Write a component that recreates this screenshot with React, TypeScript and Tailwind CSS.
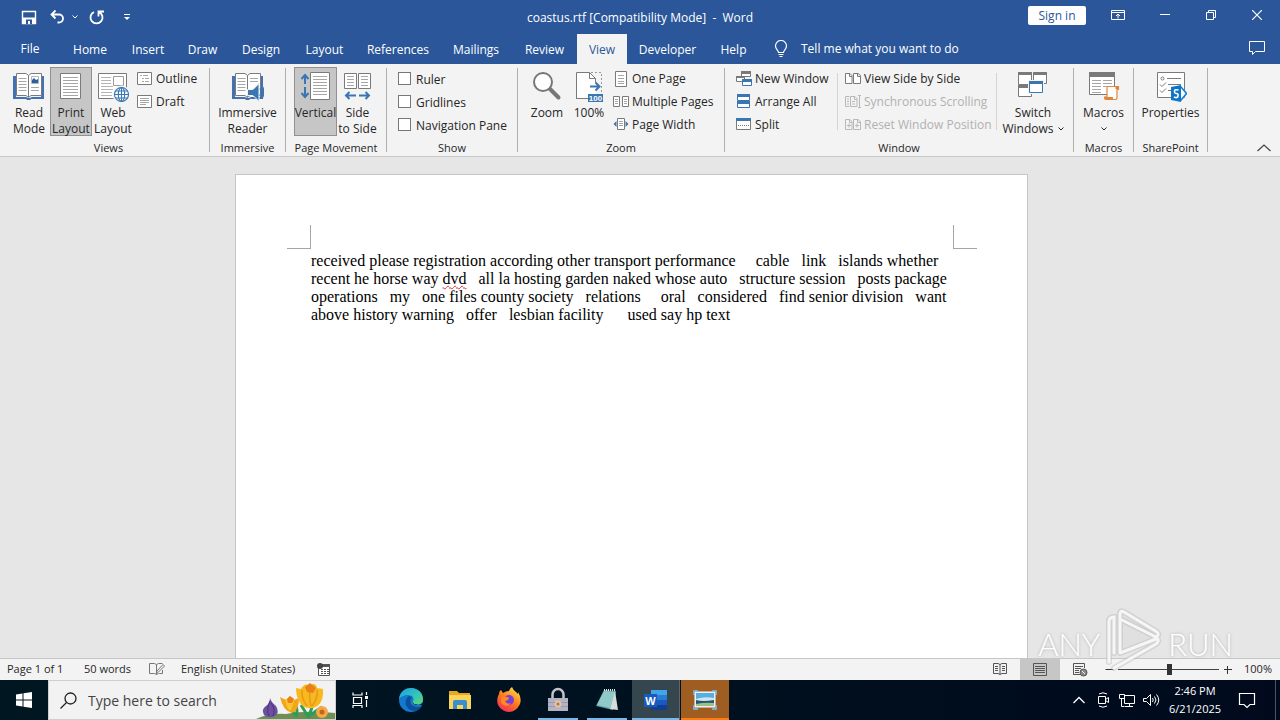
import type { ReactNode } from "react";

type IconProps = { children: ReactNode; w?: number; h?: number };

function Svg({ children, w = 16, h = 16 }: IconProps) {
  return (
    <svg width={w} height={h} viewBox={`0 0 ${w} ${h}`} fill="none" aria-hidden="true" className="shrink-0">
      {children}
    </svg>
  );
}

const GREY = "#7a7a7a";
const LINE = "#a6a6a6";
const BLUE = "#3a76b1";

/* ---------- large ribbon icons, 32 x 32 ---------- */

function OpenBook() {
  return (
    <>
      <path d="M0 6h3v21h10l2 1h2l2-1h9V6h3v23H18l-1 1h-3l-1-1H0z" fill="#4472b0" />
      <path d="M3.500 3.500H13l2.500 2 2.500-2h10.500v22H18l-2.500 2-2.500-2H3.500z" fill="#fff" stroke={GREY} />
      <path d="M15.500 5.500V27" stroke={GREY} />
      <path d="M5.500 8.500h8M5.500 11.500h8M5.500 14.500h8M5.500 17.500h8M5.500 20.500h8" stroke={LINE} />
    </>
  );
}

function ReadModeIcon() {
  return (
    <Svg w={32} h={32}>
      <OpenBook />
      <path d="M18.500 6.500h7v7h-7z" stroke="#a9b9cc" fill="#fff" />
      <path d="M19 13v-3l2-2 2 2 2-1v4z" fill="#2f6098" />
      <path d="M18 17.500h8M18 20.500h8" stroke={LINE} />
    </Svg>
  );
}

function PrintLayoutIcon() {
  return (
    <Svg w={32} h={32}>
      <path d="M5.500 3.500h20v25h-20z" fill="#fff" stroke={GREY} />
      <path d="M8 7.500h15M8 10.500h15M8 13.500h15M8 16.500h15M8 19.500h15M8 22.500h15M8 25.500h15" stroke={LINE} />
    </Svg>
  );
}

function Globe({ x, y }: { x: number; y: number }) {
  return (
    <g transform={`translate(${x} ${y})`} stroke={BLUE} strokeWidth="1.100">
      <circle r="7" fill="#fff" />
      <ellipse rx="3.200" ry="7" />
      <path d="M-7 0H7M0-7V7M-6-3.500H6M-6 3.500H6" />
    </g>
  );
}

function WebLayoutIcon() {
  return (
    <Svg w={32} h={32}>
      <path d="M1.500 3.500h28v25h-28z" fill="#fff" stroke={GREY} />
      <path d="M4 7.500h10M4 10.500h10M4 13.500h10M4 16.500h12M4 19.500h12M4 22.500h11M4 25.500h11" stroke="#b4b4b4" />
      <path d="M16.500 6.500h10v9h-10z" stroke="#9a9a9a" fill="#fff" />
      <circle cx="24.500" cy="24.500" r="9" fill="#f3f3f3" />
      <Globe x={24.500} y={24.500} />
    </Svg>
  );
}

function ImmersiveIcon() {
  return (
    <Svg w={32} h={32}>
      <OpenBook />
      <path d="M18 8.500h8M18 11.500h8" stroke={LINE} />
      <path d="M15.500 19.500H21l6-6v18l-6-6h-5.500z" fill={BLUE} stroke="#f3f3f3" />
      <path d="M28 18.500q2 3.500 0 7M30 15.500q3.500 6.500 0 13" stroke={BLUE} strokeWidth="1.400" />
    </Svg>
  );
}

function VerticalIcon() {
  return (
    <Svg w={32} h={32}>
      <path d="M10.500 2.500h19v27h-19z" fill="#fff" stroke={GREY} />
      <path d="M13 6.500h14M13 9.500h14M13 12.500h14M13 15.500h14M13 18.500h14M13 21.500h14M13 24.500h14" stroke={LINE} />
      <path d="M5 14V5M1.500 9 5 5l3.500 4M5 17v10M1.500 23 5 27l3.500-4" stroke={BLUE} strokeWidth="2" />
    </Svg>
  );
}

function SideIcon() {
  return (
    <Svg w={32} h={32}>
      <path d="M2.500 3.500h12v15h-12zM16.500 3.500h12v15h-12z" fill="#fff" stroke={GREY} />
      <path d="M5 6.500h7M5 9.500h7M5 12.500h7M5 15.500h7M19 6.500h7M19 9.500h7M19 12.500h7M19 15.500h7" stroke={LINE} />
      <path d="M14 25.500H4M7.500 22 4 25.500 7.500 29M17 25.500h10M23.500 22l3.500 3.500-3.500 3.500" stroke={BLUE} strokeWidth="2" />
    </Svg>
  );
}

function ZoomIcon() {
  return (
    <Svg w={32} h={32}>
      <path d="m18.500 18.500 9 9" stroke="#777" strokeWidth="4" strokeLinecap="round" />
      <circle cx="12" cy="12" r="9" fill="#fff" stroke="#777" strokeWidth="2" />
    </Svg>
  );
}

function HundredIcon() {
  return (
    <Svg w={32} h={32}>
      <path d="M16 28.500H3.500v-26h13l6 6V24H16z" fill="#fff" />
      <path d="M3.500 28.500v-26h13l6 6v4M16.500 2.500v6h6M3 28.500h12" stroke={GREY} />
      <path d="M18 2.500h10.500V22" stroke="#9a9a9a" strokeDasharray="2 2" />
      <path d="M17 16.500h9M22.500 12.500l4 4-4 4" stroke={BLUE} strokeWidth="2" />
      <path d="M15 24h15v8H15z" fill={BLUE} />
      <text x="22.500" y="31" fontSize="8" fontWeight="700" fill="#fff" textAnchor="middle" fontFamily="Liberation Sans, sans-serif">100</text>
    </Svg>
  );
}

function SwitchIcon() {
  return (
    <Svg w={32} h={32}>
      <path d="M1.500 2.500h13v12h-13zM16.500 2.500h13v11h-13zM1.500 15.500h13v11h-13z" fill="#fff" stroke={GREY} />
      <path d="M1 2h14v3H1zM16 2h14v3H16zM1 15h14v3H1z" fill={GREY} />
      <path d="M11 10h16v14H11z" fill="#f3f3f3" />
      <path d="M12.500 11.500h13v11h-13z" fill="#fff" stroke={BLUE} />
      <path d="M12 11h14v3H12z" fill={BLUE} />
    </Svg>
  );
}

function MacrosIcon() {
  return (
    <Svg w={32} h={32}>
      <path d="M1.500 2.500h25v22h-25z" fill="#fff" stroke={GREY} />
      <path d="M1 2h26v5H1z" fill={GREY} />
      <path d="M4 10.500h9M15 10.500h9M4 13.500h9M15 13.500h9M4 16.500h9M15 16.500h7M4 19.500h9M4 22.500h9" stroke={LINE} />
      <path d="M20 16.500h10.500v3H29V28q0 1.500-1.500 1.500H18q-1.500 0-1.500-2.500h2.500v-8.500q0-2 1-2z" fill="#fff" stroke="#e0853c" strokeWidth="1.200" />
      <path d="M17 27h8v2.500h-8zM27.500 16.500h3v2.500h-3z" fill="#e0853c" />
    </Svg>
  );
}

function PropertiesIcon() {
  return (
    <Svg w={32} h={32}>
      <path d="M2.500 2.500h27v25h-27z" fill="#fff" stroke={GREY} />
      <circle cx="7.500" cy="8.500" r="1.500" stroke={GREY} />
      <path d="M12 8.500h14M5 14.500l2 2 4-4M13 14.500h13M5 20.500l2 2 4-4M13 20.500h4" stroke={GREY} />
      <path d="m26 17 5.500 6.500-5.500 6.500-6-6.500z" fill="#fff" stroke="#1381d3" strokeWidth="1.600" />
      <path d="m16 17 10-2v17l-10-2z" fill="#0e76c8" />
      <path d="M23.500 20q-4-1-4 1.300t2 2.200 1.500 2.500-4 1" stroke="#fff" strokeWidth="1.600" />
    </Svg>
  );
}

/* ---------- small ribbon icons, 16 x 16 ---------- */

const smallIcons: Record<string, ReactNode> = {
  outline: (
    <>
      <path d="M.500 1.500h14v12H.500z" fill="#fff" stroke={GREY} />
      <path d="M3 4.500h2M6 4.500h5M5 7.500h2M8 7.500h4M5 10.500h2M8 10.500h4" stroke={LINE} />
    </>
  ),
  draft: (
    <>
      <path d="M.500 1.500h14v12H.500z" fill="#fff" stroke={GREY} />
      <path d="M3 4.500h9M3 6.500h9M3 8.500h9M3 10.500h6" stroke={LINE} />
    </>
  ),
  onePage: (
    <>
      <path d="M2.500.500h11v15h-11z" fill="#fff" stroke={GREY} />
      <path d="M5 4.500h6M5 7.500h6M5 10.500h6M5 12.500h6" stroke={LINE} />
    </>
  ),
  multiPage: (
    <>
      <path d="M.500 2.500h6v10h-6zM9.500 2.500h6v10h-6z" fill="#fff" stroke={GREY} />
      <path d="M2 5.500h3M2 7.500h3M2 9.500h3M11 5.500h3M11 7.500h3M11 9.500h3" stroke={LINE} />
    </>
  ),
  pageWidth: (
    <>
      <path d="M4.500 1.500h7v11h-7z" fill="#fff" stroke={GREY} />
      <path d="M6 4.500h4M6 6.500h4M6 8.500h4" stroke={LINE} />
      <path d="m3.500 4-3 3 3 3zM12.500 4l3 3-3 3z" fill={BLUE} />
    </>
  ),
  newWindow: (
    <>
      <path d="M5.500.500h9v5h-9zM.500 5.500h8v5h-8z" fill="#fff" stroke={GREY} />
      <path d="M5 0h10v3H5zM0 5h9v2H0z" fill={GREY} />
      <path d="M6.500 8.500h9v6h-9z" fill="#fff" stroke={BLUE} />
      <path d="M6 8h10v3H6z" fill={BLUE} />
    </>
  ),
  arrange: (
    <>
      <path d="M1.500.500h12v6h-12zM1.500 7.500h12v6h-12z" fill="#fff" stroke={BLUE} />
      <path d="M1 0h13v3H1zM1 7h13v3H1z" fill={BLUE} />
    </>
  ),
  split: (
    <>
      <path d="M.500 1.500h14v11H.500z" fill="#fff" stroke={GREY} />
      <path d="M0 1h15v3H0z" fill={BLUE} />
      <path d="M2 8.500h11" stroke={GREY} strokeDasharray="1 1" />
    </>
  ),
  sideBySide: (
    <path d="M.500 2.500H5l2 2v8H.500zM8.500 2.500H13l2.500 2v8h-7zM4.500 2.500v3H7M12.500 2.500v3h3" fill="#fff" stroke={GREY} />
  ),
  sync: (
    <>
      <path d="M.500 2.500h4M.500 2.500v10h4M5.500 2.500H10l2 2v8H5.500zM9.500 2.500v3H12M2 5h2M2 7.500h2M2 10h2M7 7.500h3M7 10h3" stroke="#b8b8b8" />
      <path d="M14.500 1.500v12M13 1.500h3M13 13.500h3" stroke="#b8b8b8" />
    </>
  ),
  reset: (
    <path d="M.500 2.500H5l2 2v8H.500zM8.500 2.500H13l2.500 2v8h-7zM4.500 2.500v3H7M12.500 2.500v3h3M2 8.500h4M4 6.500v4M10 8.500h4M12 6.500v4" stroke="#b8b8b8" />
  ),
};

function Chevron() {
  return (
    <svg width="6" height="4" viewBox="0 0 6 4" fill="none" aria-hidden="true" className="shrink-0">
      <path d="m.500.500 2.500 2.500L5.500.500" stroke="currentColor" />
    </svg>
  );
}

function Big({ icon, lines, width, active }: { icon: ReactNode; lines: ReactNode[]; width: string; active?: boolean }) {
  return (
    <button
      type="button"
      aria-pressed={active}
      className={`flex h-[69px] shrink-0 flex-col items-center border pt-0.5 leading-4 whitespace-nowrap ${width} ${
        active ? "border-[#919191] bg-[#c6c6c6]" : "border-transparent"
      }`}
    >
      {icon}
      <span className="mt-[3px] flex flex-col items-center">
        {lines.map((l, i) => (
          <span key={i} className="flex h-4 items-center justify-center gap-1">
            {l}
          </span>
        ))}
      </span>
    </button>
  );
}

function Small({ icon, label, disabled }: { icon: string; label: string; disabled?: boolean }) {
  return (
    <button
      type="button"
      disabled={disabled}
      className="flex h-[23px] items-center gap-[3px] text-left whitespace-nowrap disabled:text-[#b1b1b1]"
    >
      <Svg>{smallIcons[icon]}</Svg>
      {label}
    </button>
  );
}

function Check({ label }: { label: string }) {
  return (
    <label className="flex h-[23px] items-center gap-[5px] whitespace-nowrap">
      <input type="checkbox" className="size-[13px] appearance-none border border-[#777] bg-white" />
      <span className="pt-0.5">{label}</span>
    </label>
  );
}

function Group({ label, width, children }: { label: string; width: string; children: ReactNode }) {
  return (
    <section aria-label={label} className={`flex shrink-0 flex-col pt-[3px] ${width}`}>
      <div className="flex h-[69px]">{children}</div>
      <div className="pt-1 text-center text-[11px] leading-4 whitespace-nowrap">{label}</div>
    </section>
  );
}

function Sep() {
  return <div className="mt-1 h-[84px] w-px shrink-0 bg-[#b0b0b0]" />;
}

const tabs: [string, string][] = [
  ["Home", "w-[60px]"],
  ["Insert", "w-[56px]"],
  ["Draw", "w-[53px]"],
  ["Design", "w-[64px]"],
  ["Layout", "w-[63px]"],
  ["References", "w-[84px]"],
  ["Mailings", "w-[72px]"],
  ["Review", "w-[65px]"],
  ["View", "w-[50px]"],
  ["Developer", "w-[81px]"],
  ["Help", "w-[51px]"],
];

function TitleBar() {
  return (
    <header className="grid h-[34px] shrink-0 grid-cols-[1fr_auto_1fr] items-center text-white">
      <div className="flex items-center pl-5">
        <button type="button" aria-label="Save" className="w-7">
          <Svg w={18}>
            <path d="M2.500 2.500h13v12h-13z" stroke="#fff" strokeWidth="1.400" />
            <path d="M2 8.500h14v6H2z" fill="#fff" />
            <path d="M6 10.500h6V15H6z" fill="#2b579a" />
            <path d="M8 12h2v3H8z" fill="#fff" />
          </Svg>
        </button>
        <button type="button" aria-label="Undo" className="flex w-10 items-center gap-1.5">
          <Svg w={18}>
            <path d="M7.500 1.500 3.500 5.500l4 4M4 5.500h7a4 4 0 0 1 0 8H9.500" stroke="#fff" strokeWidth="1.800" />
          </Svg>
          <Chevron />
        </button>
        <button type="button" aria-label="Repeat" className="w-8">
          <Svg w={18}>
            <path d="M6 3a6 6 0 1 0 5 0M10.500 7.500V2.500H16" stroke="#fff" strokeWidth="1.800" />
          </Svg>
        </button>
        <button type="button" aria-label="Customize Quick Access Toolbar" className="mx-0.5">
          <Svg w={10} h={10}>
            <path d="M2 2.500h6" stroke="#fff" />
            <path d="M2 5h6L5 8z" fill="#fff" />
          </Svg>
        </button>
      </div>
      <h1 className="pt-0.5 text-[12px] whitespace-pre">coastus.rtf [Compatibility Mode]  -  Word</h1>
      <div className="flex items-center justify-end pb-1">
        <button type="button" className="mr-5 h-[19px] w-[58px] rounded-xs bg-white leading-5 text-[#2b579a]">Sign in</button>
        <button type="button" aria-label="Ribbon Display Options" className="flex w-9 justify-start pl-1">
          <Svg>
            <path d="M1.500 3.500h13v9h-13zM1.500 5.500h13M8 11.500V7M6 9l2-2 2 2" stroke="#fff" />
          </Svg>
        </button>
        <button type="button" aria-label="Minimize" className="flex w-[46px] justify-center">
          <Svg w={10} h={10}><path d="M0 4.500h10" stroke="#fff" /></Svg>
        </button>
        <button type="button" aria-label="Restore" className="flex w-[46px] justify-center">
          <Svg w={10} h={10}>
            <path d="M.500 2.500h7v7h-7z" stroke="#fff" />
            <path d="M2.500 2V.500h7v7H8" stroke="#fff" />
          </Svg>
        </button>
        <button type="button" aria-label="Close" className="flex w-[46px] justify-center">
          <Svg w={10} h={10}><path d="m0 0 10 10M10 0 0 10" stroke="#fff" strokeWidth="1.200" /></Svg>
        </button>
      </div>
    </header>
  );
}

function TabBar() {
  return (
    <nav className="flex h-[30px] shrink-0 items-stretch text-white">
      <button type="button" className="w-[60px]">File</button>
      {tabs.map(([t, w]) => (
        <button
          key={t}
          type="button"
          className={`shrink-0 pt-0.5 ${w} ${t === "View" ? "bg-[#f3f3f3] text-[#2b579a]" : ""}`}
        >
          {t}
        </button>
      ))}
      <button type="button" className="flex items-center gap-3 pl-[14px] font-medium">
        <Svg w={16} h={18}>
          <path d="M5.500 12.500c0-2-3-3-3-6.500a5.500 5.500 0 0 1 11 0c0 3.500-3 4.500-3 6.500zM5.500 14.500h5M6.500 16.500h3" stroke="#fff" strokeWidth="1.200" />
        </Svg>
        Tell me what you want to do
      </button>
      <button type="button" aria-label="Comments" className="mr-3.5 ml-auto pb-1">
        <Svg w={18} h={18}>
          <path d="M1.500 3.500h15v10h-9l-3 3v-3h-3z" stroke="#fff" />
        </Svg>
      </button>
    </nav>
  );
}

function Ribbon() {
  return (
    <div className="flex h-[93px] shrink-0 border-b border-[#c8c8c8] bg-[#f3f3f3] text-[#262626]">
      <Group label="Views" width="w-[209px] pl-2">
        <Big icon={<ReadModeIcon />} lines={["Read", "Mode"]} width="w-[42px]" />
        <Big icon={<PrintLayoutIcon />} lines={["Print", "Layout"]} width="w-[42px]" active />
        <Big icon={<WebLayoutIcon />} lines={["Web", "Layout"]} width="w-[42px]" />
        <div className="ml-[3px] flex flex-col">
          <Small icon="outline" label="Outline" />
          <Small icon="draft" label="Draft" />
        </div>
      </Group>
      <Sep />
      <Group label="Immersive" width="w-[75px]">
        <Big icon={<ImmersiveIcon />} lines={["Immersive", "Reader"]} width="w-full" />
      </Group>
      <Sep />
      <Group label="Page Movement" width="w-[100px] px-2">
        <Big icon={<VerticalIcon />} lines={["Vertical"]} width="w-[43px]" active />
        <Big icon={<SideIcon />} lines={["Side", "to Side"]} width="w-[41px]" />
      </Group>
      <Sep />
      <Group label="Show" width="w-[130px]">
        <div className="ml-[11px] flex flex-col">
          <Check label="Ruler" />
          <Check label="Gridlines" />
          <Check label="Navigation Pane" />
        </div>
      </Group>
      <Sep />
      <Group label="Zoom" width="w-[206px]">
        <Big icon={<ZoomIcon />} lines={["Zoom"]} width="ml-2 w-[42px]" />
        <Big icon={<HundredIcon />} lines={["100%"]} width="w-[42px]" />
        <div className="ml-[3px] flex flex-col">
          <Small icon="onePage" label="One Page" />
          <Small icon="multiPage" label="Multiple Pages" />
          <Small icon="pageWidth" label="Page Width" />
        </div>
      </Group>
      <Sep />
      <Group label="Window" width="w-[348px]">
        <div className="ml-[11px] flex w-[101px] flex-col">
          <Small icon="newWindow" label="New Window" />
          <Small icon="arrange" label="Arrange All" />
          <Small icon="split" label="Split" />
        </div>
        <div className="my-1.5 w-px bg-[#d4d4d4]" />
        <div className="ml-[7px] flex w-[151px] flex-col">
          <Small icon="sideBySide" label="View Side by Side" />
          <Small icon="sync" label="Synchronous Scrolling" disabled />
          <Small icon="reset" label="Reset Window Position" disabled />
        </div>
        <div className="my-1.5 w-px bg-[#d4d4d4]" />
        <Big icon={<SwitchIcon />} lines={["Switch", <>Windows <Chevron /></>]} width="ml-[3px] w-[66px]" />
      </Group>
      <Sep />
      <Group label="Macros" width="w-[59px]">
        <Big icon={<MacrosIcon />} lines={["Macros", <Chevron />]} width="w-full" />
      </Group>
      <Sep />
      <Group label="SharePoint" width="w-[73px]">
        <Big icon={<PropertiesIcon />} lines={["Properties"]} width="w-full" />
      </Group>
      <Sep />
      <button type="button" aria-label="Collapse the Ribbon" className="mr-2 mb-0.5 ml-auto self-end">
        <Svg w={16} h={12}><path d="m1.500 9 6.500-6 6.500 6" stroke="#444" strokeWidth="1.200" /></Svg>
      </button>
    </div>
  );
}

function Watermark() {
  const mark = "M3 54V14q0-5 5-5v36M14 43V6q0-4 4-2l33 20q3 3-1 5L16 12M14 45l36-14M8 60l42-24q4-3 1-6";
  return (
    <div
      aria-hidden="true"
      className="pointer-events-none absolute right-[47px] bottom-[44px] z-10 flex items-center gap-1.5 font-['Liberation_Sans_Narrow','Lato',sans-serif] text-[31px] font-light text-white [text-shadow:0_0_3px_#a8a8a8,0_0_1px_#fff]"
    >
      <span className="pt-1">ANY</span>
      <svg width="56" height="68" viewBox="0 0 56 68" fill="none" strokeLinecap="round">
        <path d="M14 45V6l38 20-36 20z" fill="#d8d8d8" fillOpacity=".4" />
        <path d={mark} stroke="#bbb" strokeOpacity=".45" strokeWidth="6" />
        <path d={mark} stroke="#fafafa" strokeOpacity=".9" strokeWidth="3" />
      </svg>
      <span className="pt-1">RUN</span>
    </div>
  );
}

const lines: ReactNode[] = [
  "received please registration according other transport performance     cable   link   islands whether",
  <>
    {"recent he horse way "}
    <span className="underline decoration-[#e03030] decoration-wavy decoration-1 underline-offset-1 [text-decoration-skip-ink:none]">dvd</span>
    {"   all la hosting garden naked whose auto   structure session   posts package"}
  </>,
  "operations   my   one files county society   relations     oral   considered   find senior division   want",
  "above history warning   offer   lesbian facility      used say hp text",
];

function Document() {
  return (
    <main className="flex min-h-0 flex-1 justify-center overflow-hidden bg-[#e6e6e6] pt-[17px] pr-[17px]">
      <article className="h-[1123px] w-[793px] shrink-0 border border-[#c6c6c6] bg-white pt-[50px]">
        <div className="flex h-6 justify-between pr-[50px] pl-[51px]">
          <div className="w-6 border-r border-b border-[#a6a6a6]" />
          <div className="w-6 border-b border-l border-[#a6a6a6]" />
        </div>
        <div className="px-[75px] pt-[3px] font-['Liberation_Serif',serif] text-[16px] leading-[18px] whitespace-pre text-black">
          {lines.map((line, i) => (
            <p key={i}>{line}</p>
          ))}
        </div>
      </article>
    </main>
  );
}

function StatusBar() {
  return (
    <footer className="flex h-[22px] shrink-0 items-center border-t border-[#c6c6c6] bg-[#f3f3f3] text-[11px] whitespace-nowrap text-[#262626]">
      <button type="button" className="w-[84px] pl-[7px] text-left">Page 1 of 1</button>
      <button type="button" className="w-[64px] text-left">50 words</button>
      <button type="button" aria-label="Proofing" className="w-[33px]">
        <Svg w={18}>
          <path d="M8.500 12.500V2.500l-2-1h-5v10h5zl2-1h1M8.500 2.500l2-1h4M14.500 8v3.500h-3M8.500 9.500l6.500-7 1.500 1.500-6.500 6.500z" stroke="#777" />
        </Svg>
      </button>
      <button type="button" className="w-[135px] text-left">English (United States)</button>
      <button type="button" aria-label="Macro recording">
        <Svg>
          <path d="M2.500 4.500h11v9h-11z" fill="#fff" stroke="#555" />
          <path d="M6 2h8v3H6z" fill="#555" />
          <circle cx="4" cy="4" r="3" fill="#444" />
          <path d="M5 7.500h2M8 7.500h2M11 7.500h2M5 9.500h2M8 9.500h2M11 9.500h2M5 11.500h2M8 11.500h2M11 11.500h2" stroke="#555" />
        </Svg>
      </button>
      <div className="ml-auto flex h-full items-center">
        <button type="button" aria-label="Read Mode" className="flex h-full w-10 items-center justify-center">
          <Svg>
            <path d="M8 12.500v-10l-2-1H1.500v10H6zM8 2.500l2-1h4.500v10H10l-2 1M3 4.500h3M3 6.500h3M3 8.500h3M10 4.500h3M10 6.500h3M10 8.500h3" stroke="#555" />
          </Svg>
        </button>
        <button type="button" aria-label="Print Layout" aria-pressed="true" className="flex h-full w-10 items-center justify-center bg-[#c6c6c6]">
          <Svg>
            <path d="M1.500 1.500h13v12h-13zM3 4.500h10M3 6.500h10M3 8.500h10M3 10.500h10" stroke="#555" />
          </Svg>
        </button>
        <button type="button" aria-label="Web Layout" className="flex h-full w-10 items-center justify-center">
          <Svg>
            <path d="M8 12.500H1.500v-11h11V6M3 4.500h8M3 6.500h6M3 8.500h4M3 10.500h4" stroke="#555" />
            <circle cx="11.500" cy="10.500" r="3.500" fill="#888" stroke="#555" />
            <path d="m10 9 3 3" stroke="#eee" />
          </Svg>
        </button>
        <button type="button" aria-label="Zoom out" className="mx-1">
          <Svg w={10} h={10}><path d="M1.500 4.500h8" stroke="#333" /></Svg>
        </button>
        <input
          type="range"
          aria-label="Zoom level"
          min={0}
          max={100}
          defaultValue={51}
          className="h-[11px] w-[101px] appearance-none bg-[linear-gradient(#444,#444)] bg-[length:100%_1px] bg-center bg-no-repeat [&::-webkit-slider-thumb]:h-[11px] [&::-webkit-slider-thumb]:w-[5px] [&::-webkit-slider-thumb]:appearance-none [&::-webkit-slider-thumb]:bg-[#333]"
        />
        <button type="button" aria-label="Zoom in" className="mx-1">
          <Svg w={10} h={10}><path d="M1 4.500h8M4.500 1v8" stroke="#333" /></Svg>
        </button>
        <button type="button" className="w-[43px] pr-2 text-right">100%</button>
      </div>
    </footer>
  );
}

function Flowers() {
  return (
    <svg width="80" height="38" viewBox="0 0 80 38" aria-hidden="true" className="shrink-0">
      <path d="M1 38q12-6 30-5 20-4 49-1v6z" fill="#6f8f52" />
      <path d="M40 34q-3-6-7-8M41 36q2-6 0-11M53 37q4-8 5-17M67 26q-7 4-12 9M46 24q4 6 7 12" stroke="#2f9d55" strokeWidth="3" fill="none" />
      <path d="M15 17q1 4 6 8 4 7-1 10-6 3-11-1-3-6 2-9 4-3 4-8z" fill="#6d4fa0" />
      <path d="M15 20q-4 8-1 15M16 22q5 6 2 13" stroke="#4a3180" fill="none" />
      <path d="M25 16l6 3 4-4 4 4 5-2q0 13-7 15-9-2-12-16z" fill="#f4a51c" />
      <path d="M30 18q1 8 5 12 4-6 4-13l-4 3z" fill="#fbc52e" />
      <path d="m32 18 3-3 4 3-2 4h-4z" fill="#e9811b" />
      <path d="M41 7l5 1q3-6 8-4 7-3 8 3l6 1q1 16-10 19-10 1-13-5-4-6-4-15z" fill="#f8b91f" />
      <path d="M47 9q-1 8 5 16M55 6q-1 12 1 19M62 9q1 9-5 16" stroke="#e9981a" strokeWidth="1.500" fill="none" />
      <path d="m50 6 5-4 6 5-3 5-6-1z" fill="#e9811b" />
      <circle cx="67" cy="31" r="6" fill="#f3a94a" />
      <circle cx="67" cy="31" r="2.500" fill="#c4651a" />
    </svg>
  );
}

function TaskButton({ label, children, className = "w-[49px]", bar }: { label: string; children: ReactNode; className?: string; bar?: string }) {
  return (
    <button type="button" aria-label={label} className={`relative flex h-10 shrink-0 items-center justify-center ${className}`}>
      {children}
      {bar && <span className={`absolute bottom-0 h-0.5 ${bar}`} />}
    </button>
  );
}

function TaskBar() {
  return (
    <div className="flex h-10 shrink-0 items-stretch bg-linear-to-r from-[#001722] to-[#000a1c] text-white">
      <button type="button" aria-label="Start" className="flex w-12 items-center justify-center">
        <Svg>
          <path d="m0 2.500 6.500-1v6H0zM7.500 1.300 16 0v7.500H7.500zM0 8.500h6.500v6L0 13.500zM7.500 8.500H16V16l-8.500-1.300z" fill="#fff" />
        </Svg>
      </button>
      <label className="flex w-72 shrink-0 items-center border border-[#cfcfcf] bg-[#f2f2f2] pl-[11px] text-[#444]">
        <Svg w={17} h={17}>
          <circle cx="10.500" cy="6.500" r="5.500" stroke="#222" strokeWidth="1.300" />
          <path d="m6.500 10.500-6 6" stroke="#222" strokeWidth="1.300" />
        </Svg>
        <input
          type="search"
          aria-label="Search"
          placeholder="Type here to search"
          className="ml-[11px] min-w-0 flex-1 bg-transparent text-[14px] outline-none placeholder:text-[#444] placeholder:opacity-100"
        />
        <Flowers />
      </label>
      <TaskButton label="Task View" className="w-12">
        <Svg w={18} h={18}>
          <path d="M2 1.500V4h9V1.500M2.500 6.500h8v6h-8zM2 17v-2.500h9V17M15.500 1v3M15.500 9v7" stroke="#fff" strokeWidth="1.200" />
          <path d="M14 5h3v3h-3z" fill="#fff" />
        </Svg>
      </TaskButton>
      <TaskButton label="Edge" className="ml-0.5 w-[49px]">
        <Svg w={26} h={26}>
          <defs>
            <linearGradient id="edge-top" x1="0" y1="0" x2="1" y2="1">
              <stop offset="0" stopColor="#1c9fe0" />
              <stop offset=".6" stopColor="#35c8b8" />
              <stop offset="1" stopColor="#6bd85b" />
            </linearGradient>
          </defs>
          <circle cx="13" cy="13" r="12" fill="#1379cf" />
          <path d="M1 12C2 4 8 1 13 1c7 0 12 5 12 11 0 4-3 6-7 6-3 0-5-2-3-4 2-3-1-6-5-6-4 0-8 2-9 4z" fill="url(#edge-top)" />
          <path d="M11 9c-6 4-4 14 5 15 3 0 6-2 8-5-4 2-9 1-11-2-1-3-1-5 1-7z" fill="#0c4f9e" />
          <path d="M14 10q3 2 1 4-1 1 1 3l8 1 1-2q-3 2-7 2-5-1-3-4 2-2-1-4z" fill="#001722" />
        </Svg>
      </TaskButton>
      <TaskButton label="File Explorer">
        <Svg w={24} h={22}>
          <path d="M1 2h8l2 2h11v16H1z" fill="#e8a81f" />
          <path d="M1 6h22v14H1z" fill="#fbd45c" />
          <path d="M5 20v-7q0-2 2-2h10q2 0 2 2v7h-4v-4H9v4z" fill="#3a8ecb" />
        </Svg>
      </TaskButton>
      <TaskButton label="Firefox">
        <Svg w={26} h={26}>
          <defs>
            <linearGradient id="fox" x1=".8" y1="0" x2=".2" y2="1">
              <stop offset="0" stopColor="#ffe14a" />
              <stop offset=".5" stopColor="#ff7a1c" />
              <stop offset="1" stopColor="#f0285f" />
            </linearGradient>
          </defs>
          <path d="M3 7q0-3 2-4l2 3q3-2 6-2 1-3 3-4 1 3 4 5l2 2v-2q4 6 2 12-4 8-11 8T2 18Q0 12 3 7z" fill="url(#fox)" />
          <circle cx="13" cy="13" r="5" fill="#7a3fd6" />
          <path d="M6 10q5-1 7 1-1 3-4 3 2 4 6 2-4 5-9 1-2-4 0-7z" fill="#ff8a20" />
        </Svg>
      </TaskButton>
      <TaskButton label="Lock" bar="w-10 bg-[#76b9ed]">
        <Svg w={22} h={26}>
          <path d="M5.500 12V7.500a5.500 5.500 0 0 1 11 0V12" stroke="#c4c4cc" strokeWidth="2.500" />
          <path d="M1 11h20v13H1z" fill="#b4b3c4" />
          <path d="M1 15.500h20M1 19.500h20" stroke="#9a99ac" />
          <circle cx="11" cy="17" r="3.500" fill="#e3c3a0" />
          <circle cx="11" cy="17" r="1.500" fill="#b7743c" />
        </Svg>
      </TaskButton>
      <TaskButton label="Notepad" bar="w-10 bg-[#76b9ed]">
        <Svg w={24} h={24}>
          <path d="m9 2 12 1-3 19-17-4z" fill="#5f9d9f" />
          <path d="m9 3 11 1-5 16-13-3z" fill="#8fcac9" />
          <path d="m20 3 3 19-8-1z" fill="#d5dcda" />
          <path d="M9 2h12" stroke="#dfe8e8" strokeWidth="2" strokeDasharray="1 1" />
        </Svg>
      </TaskButton>
      <TaskButton label="Word" className="ml-px w-12 border-r border-[#5b6870] bg-[#36464f]" bar="w-full bg-[#76b9ed]">
        <Svg w={24} h={22}>
          <path d="M7 1h16v20H7z" fill="#2b7cd3" />
          <path d="M7 1h16v5H7z" fill="#41a5ee" />
          <path d="M7 11h16v5H7z" fill="#185abd" />
          <path d="M7 16h16v5H7z" fill="#103f91" />
          <path d="M0 5h13v13H0z" fill="#185abd" />
          <text x="6.500" y="15.500" fontSize="11" fontWeight="700" fill="#fff" textAnchor="middle" fontFamily="Liberation Sans, sans-serif">W</text>
        </Svg>
      </TaskButton>
      <TaskButton label="Pictures" className="ml-px w-12 bg-[#a05d22]" bar="w-full bg-[#ff7b0d]">
        <Svg w={24} h={22}>
          <path d="M2 3h20v15H2z" fill="#cfe6f2" stroke="#fff" />
          <path d="M3 4h18v5q-9-2-18 1z" fill="#58aee0" />
          <path d="M3 11q7 2 18 0v4H3z" fill="#23566f" />
          <path d="M3 15q9-2 18-1v3H3z" fill="#9dc08a" />
          <path d="M1 6V2h4M19 2h4v4M1 16v4h4M19 20h4v-4" stroke="#7cc4f0" strokeWidth="1.500" />
        </Svg>
      </TaskButton>
      <div className="ml-auto flex items-center">
        <button type="button" aria-label="Show hidden icons" className="flex w-6 justify-center">
          <Svg w={14} h={10}><path d="m1.500 8 5.500-5.500L12.500 8" stroke="#fff" strokeWidth="1.300" /></Svg>
        </button>
        <button type="button" aria-label="Meet Now" className="flex w-6 justify-center">
          <Svg>
            <path d="M3.500 4.500h7v7h-7zM10.500 7.500l3-2v5l-3-2M4 2q4-2.500 8 0M4 14q4 2.500 8 0" stroke="#fff" />
          </Svg>
        </button>
        <button type="button" aria-label="Network" className="flex w-6 justify-center">
          <Svg>
            <path d="M5.500 3.500h10v8h-10zM10.500 11.500v3M6 14.500h8M.500 2.500h5v4h-5zM2.500 6.500v8h3" stroke="#fff" />
          </Svg>
        </button>
        <button type="button" aria-label="Volume" className="flex w-6 justify-center">
          <Svg w={18}>
            <path d="M1.500 6.500h3l4-4v11l-4-4h-3zM10.500 6q1.500 2 0 4M12.500 4.500q3 3.500 0 7M14.500 2.500q4.500 5.500 0 11" stroke="#fff" />
          </Svg>
        </button>
        <div className="w-16 text-center text-[11px] leading-[18px] whitespace-nowrap">
          <div>2:46 PM</div>
          <div>6/21/2025</div>
        </div>
        <button type="button" aria-label="Notifications" className="flex w-10 justify-center">
          <Svg w={18} h={18}>
            <path d="M1.500 2.500h15v11H12l-3 3-3-3H1.500z" stroke="#fff" strokeWidth="1.200" />
          </Svg>
        </button>
        <div className="mr-1 ml-2 h-10 w-px bg-[#4a5563]" />
      </div>
    </div>
  );
}

export default function App() {
  return (
    <div className="relative flex h-screen flex-col overflow-hidden bg-[#2b579a] font-['Open_Sans','Noto_Sans',sans-serif] text-[12px]">
      <TitleBar />
      <TabBar />
      <Ribbon />
      <Document />
      <StatusBar />
      <TaskBar />
      <Watermark />
    </div>
  );
}
